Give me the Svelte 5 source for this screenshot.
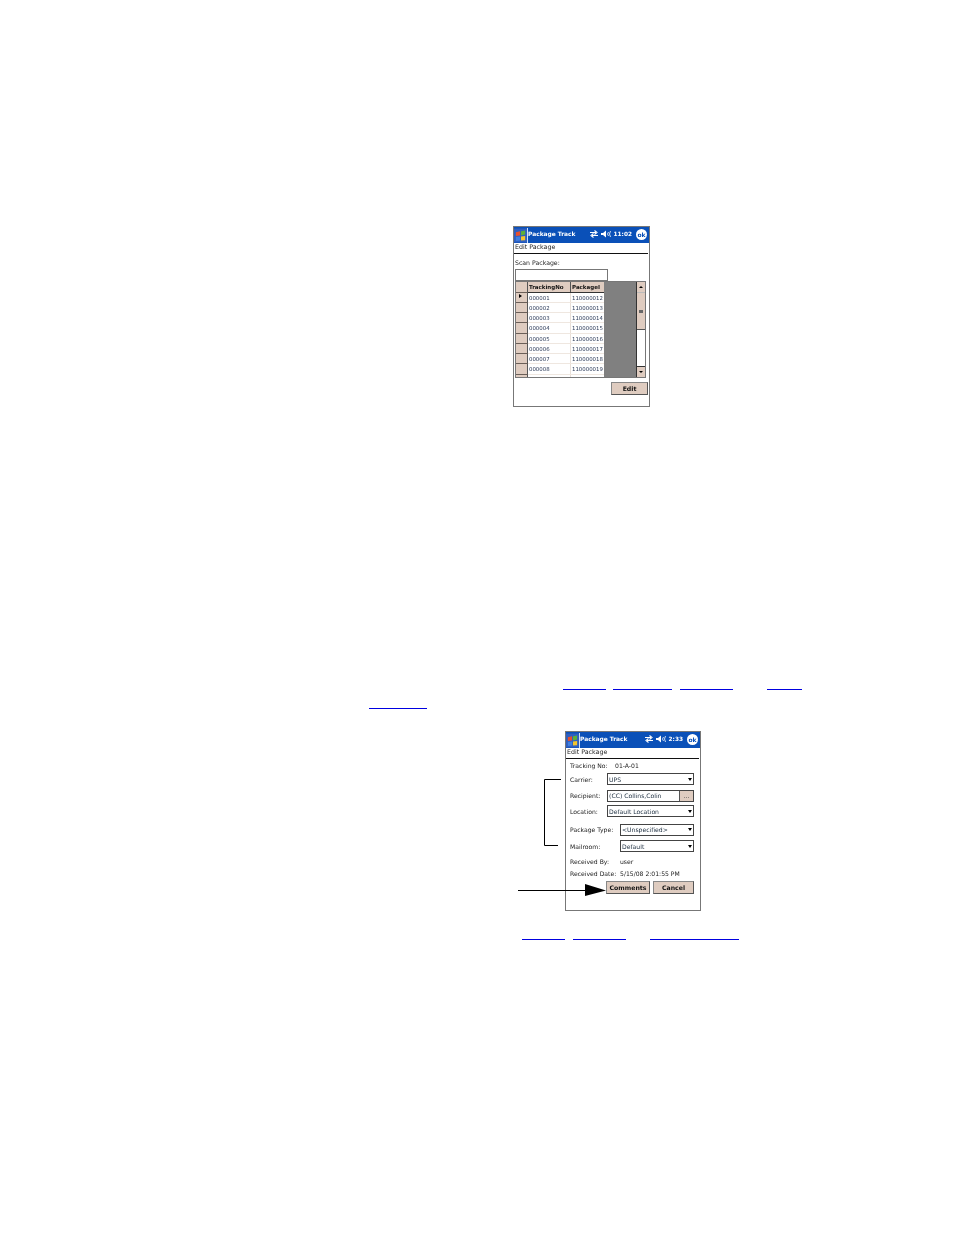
<script lang="ts">
  const rows = [
    ["000001", "110000012"],
    ["000002", "110000013"],
    ["000003", "110000014"],
    ["000004", "110000015"],
    ["000005", "110000016"],
    ["000006", "110000017"],
    ["000007", "110000018"],
    ["000008", "110000019"],
  ];

  // blue underlines left over from the cross references on the page
  const links = [
    { x: 563, y: 689, w: 43 },
    { x: 613, y: 689, w: 59 },
    { x: 680, y: 689, w: 53 },
    { x: 767, y: 689, w: 35 },
    { x: 369, y: 708, w: 58 },
    { x: 522, y: 939, w: 43 },
    { x: 573, y: 939, w: 53 },
    { x: 650, y: 939, w: 89 },
  ];
</script>

{#snippet titlebar(time)}
  <div class="titlebar">
    <svg class="flag" viewBox="0 0 14 15" width="13" height="15">
      <rect width="14" height="15" fill="#2f5fc0" />
      <path d="M2 4 L6.5 3 L6.5 7.5 L2 8Z" fill="#e8502c" />
      <path d="M7.5 3 L12 2 L12 6.5 L7.5 7.5Z" fill="#5cb03a" />
      <path d="M2 9 L6.5 8.5 L6.5 13 L2 13.5Z" fill="#3f7fe0" />
      <path d="M7.5 8.5 L12 8 L12 12.5 L7.5 13Z" fill="#f5c52a" />
    </svg>
    <span class="app-name">Package Track</span>
    <svg class="status" viewBox="0 0 10 8" width="10" height="8">
      <path d="M1 2.5H7M5.5 0.5L8 2.5L5.5 4.5M9 5.5H3M4.5 3.5L2 5.5L4.5 7.5" stroke="#fff" stroke-width="1.1" fill="none" />
    </svg>
    <svg class="status" viewBox="0 0 10 8" width="10" height="8">
      <path d="M0 3H2L5 0.5V7.5L2 5H0Z" fill="#fff" />
      <path d="M7.5 2L6.5 4L7.5 6M9.5 1L8.5 4L9.5 7" stroke="#fff" stroke-width="0.8" fill="none" />
    </svg>
    <span class="clock">{time}</span>
    <span class="ok">ok</span>
  </div>
  <div class="menu">Edit Package</div>
{/snippet}

{#snippet combo(text, cls)}
  <div class="combo {cls}">
    <span class="combo-text">{text}</span>
    <i class="caret"></i>
  </div>
{/snippet}

<div class="page">
  <div class="device first">
    {@render titlebar("11:02")}
    <div class="scan">
      <div class="label">Scan Package:</div>
      <div class="scan-input"></div>
      <div class="grid">
        <div class="grid-table">
          <div class="grid-row head">
            <span class="cell stub"></span>
            <span class="cell c1">TrackingNo</span>
            <span class="cell c2">PackageI</span>
          </div>
          {#each rows as row, i}
            <div class="grid-row">
              <span class="cell stub" class:current={i === 0}></span>
              <span class="cell c1">{row[0]}</span>
              <span class="cell c2">{row[1]}</span>
            </div>
          {/each}
          <div class="grid-row stump"><span class="cell stub"></span><span class="cell c1"></span><span class="cell c2"></span></div>
        </div>
        <div class="grid-empty"></div>
        <div class="scrollbar">
          <span class="arrow up"></span>
          <span class="thumb"><i></i></span>
          <span class="track"></span>
          <span class="arrow down"></span>
        </div>
      </div>
      <div class="actions">
        <button class="btn edit">Edit</button>
      </div>
    </div>
  </div>

  <div class="device second">
    {@render titlebar("2:33")}
    <div class="form">
      <div class="line tracking"><span class="k">Tracking No:</span><span>01-A-01</span></div>
      <div class="field"><span class="k">Carrier:</span>{@render combo("UPS", "wide")}</div>
      <div class="field tight"><span class="k">Recipient:</span>
        <div class="picker"><span class="combo-text">(CC) Collins,Colin</span><button class="dots">...</button></div>
      </div>
      <div class="field roomy"><span class="k">Location:</span>{@render combo("Default Location", "wide")}</div>
      <div class="field"><span class="k">Package Type:</span>{@render combo("<Unspecified>", "narrow")}</div>
      <div class="field tight"><span class="k">Mailroom:</span>{@render combo("Default", "narrow")}</div>
      <div class="line received"><span class="k2">Received By:</span><span>user</span></div>
      <div class="line received"><span class="k2">Received Date:</span><span>5/15/08 2:01:55 PM</span></div>
      <div class="form-actions">
        <button class="btn comments">Comments</button>
        <button class="btn cancel">Cancel</button>
      </div>
    </div>
  </div>

  <!-- callouts drawn over the page -->
  <svg class="callouts" viewBox="0 0 954 1235" width="954" height="1235">
    <path d="M561 779.5H544.5V845.5H558" stroke="#000" fill="none" />
    <path d="M518 890.5H590" stroke="#000" fill="none" />
    <path d="M585 884L606 890.5L585 896Z" fill="#000" />
  </svg>

  {#each links as l}
    <span class="link" style="left:{l.x}px;top:{l.y}px;width:{l.w}px"></span>
  {/each}
</div>

<style>
  :global(body) {
    margin: 0;
    background: #fff;
  }

  .page {
    position: relative;
    width: 954px;
    height: 1235px;
    overflow: hidden;
    font-family: "DejaVu Sans", sans-serif;
    font-size: 6.1px;
    color: #222;
  }

  .device {
    position: absolute;
    box-sizing: border-box;
    border: 1px solid #777;
    background: #fff;
    width: 137px;
    display: flex;
    flex-direction: column;
    filter: blur(0.25px);
  }

  .first {
    left: 513px;
    top: 226px;
    height: 181px;
  }

  .second {
    left: 565px;
    top: 731px;
    width: 136px;
    height: 180px;
  }

  .titlebar {
    height: 14px;
    padding-bottom: 2px;
    box-sizing: content-box;
    background: #0a50b8;
    display: flex;
    align-items: center;
    color: #fff;
    flex: none;
  }

  .flag {
    flex: none;
    margin-bottom: -2px;
    border-right: 1px solid #cfe0f7;
  }

  .app-name {
    font-weight: 700;
    flex: 1;
    white-space: nowrap;
    font-size: 5.9px;
  }

  .status {
    margin-right: 2px;
  }

  .clock {
    font-weight: 700;
    font-size: 5.8px;
    margin: 0 4px 0 1px;
  }

  .ok {
    width: 11px;
    height: 11px;
    border-radius: 50%;
    background: #fff;
    color: #0a50b8;
    font-weight: 700;
    font-size: 6px;
    line-height: 11px;
    text-align: center;
    margin-right: 2px;
  }

  .menu {
    height: 10px;
    line-height: 7px;
    padding-left: 1px;
    border-bottom: 1.5px solid #111;
    margin-right: 1px;
    flex: none;
    font-size: 6.3px;
  }

  .scan {
    padding: 0 1px;
    flex: 1;
    display: flex;
    flex-direction: column;
  }

  .label {
    height: 13px;
    line-height: 13px;
    padding-top: 2px;
    font-size: 6.2px;
  }

  .scan-input {
    width: 93px;
    height: 12px;
    box-sizing: border-box;
    border: 1px solid #777;
    flex: none;
  }

  .grid {
    display: flex;
    width: 131px;
    height: 97px;
    background: #808080;
    border: 1px solid #777;
    box-sizing: border-box;
    overflow: hidden;
  }

  .grid-table {
    width: 88px;
    flex: none;
    background: #fff;
    overflow: hidden;
  }

  .grid-row {
    display: flex;
    height: 10.25px;
    line-height: 10px;
    box-sizing: border-box;
    border-bottom: 1px solid #efe7e0;
    color: #2c3a58;
    font-size: 5.4px;
  }

  .head {
    color: #111;
    font-weight: 700;
    height: 10.5px;
    border-bottom: 1px solid #333;
    font-size: 5.5px;
  }

  .head .cell {
    background: #dfccc0;
    border-right-color: #555;
  }

  .cell {
    display: block;
    white-space: nowrap;
    overflow: hidden;
    box-sizing: border-box;
    padding-left: 1px;
    border-right: 1px solid #e8dfd8;
  }

  .stub {
    width: 12px;
    background: #dfccc0;
    border-bottom: 1px solid #6b5f58;
    border-right-color: #555;
    margin-bottom: -1px;
    position: relative;
  }

  .current::after {
    content: "";
    position: absolute;
    left: 3px;
    top: 1px;
    border-left: 3px solid #000;
    border-top: 2.5px solid transparent;
    border-bottom: 2.5px solid transparent;
  }

  .c1 {
    width: 43px;
  }

  .c2 {
    width: 33px;
    border-right: 0;
  }

  .stump {
    border: 0;
  }

  .grid-empty {
    flex: 1;
  }

  .scrollbar {
    width: 8px;
    flex: none;
    background: #fff;
    border-left: 1px solid #333;
    display: flex;
    flex-direction: column;
  }

  .arrow {
    height: 10px;
    background: #dfccc0;
    flex: none;
    position: relative;
  }

  .arrow::after {
    content: "";
    position: absolute;
    left: 1.5px;
    top: 4px;
    border-left: 2.5px solid transparent;
    border-right: 2.5px solid transparent;
  }

  .up::after {
    border-bottom: 2.5px solid #000;
  }

  .down {
    border-top: 1px solid #333;
  }

  .down::after {
    border-top: 2.5px solid #000;
  }

  .thumb {
    height: 38px;
    background: #dfccc0;
    border-top: 1px solid #bbb;
    border-bottom: 1px solid #555;
    display: flex;
    align-items: center;
    justify-content: center;
    box-sizing: border-box;
    flex: none;
  }

  .thumb i {
    width: 4px;
    height: 3px;
    background: #666;
  }

  .track {
    flex: 1;
  }

  .actions {
    display: flex;
    justify-content: flex-end;
    padding-top: 4px;
  }

  .btn {
    font: 700 6.2px "DejaVu Sans", sans-serif;
    background: #dfccc0;
    border: 1px solid #555;
    border-top-color: #888;
    border-left-color: #888;
    color: #111;
    height: 13px;
    padding: 0;
    box-sizing: border-box;
  }

  .edit {
    width: 37px;
  }

  .form {
    padding: 0 6px 0 4px;
    display: flex;
    flex-direction: column;
  }

  .line {
    display: flex;
    align-items: center;
    white-space: nowrap;
  }

  .tracking {
    height: 12px;
    margin-bottom: 2px;
  }

  .tracking .k {
    width: 45px;
  }

  .field {
    display: flex;
    align-items: center;
    justify-content: space-between;
    height: 12px;
    margin-bottom: 4.5px;
    white-space: nowrap;
  }

  .tight {
    margin-bottom: 3.5px;
  }

  .roomy {
    margin-bottom: 6.5px;
  }

  .combo,
  .picker {
    height: 12px;
    box-sizing: border-box;
    border: 1px solid #444;
    background: #fff;
    display: flex;
    align-items: center;
    flex: none;
    color: #234;
  }

  .wide {
    width: 87px;
  }

  .narrow {
    width: 74px;
  }

  .picker {
    width: 87px;
    overflow: hidden;
  }

  .combo-text {
    flex: 1;
    padding-left: 1px;
    font-size: 6.1px;
  }

  .caret {
    border-left: 2.5px solid transparent;
    border-right: 2.5px solid transparent;
    border-top: 3px solid #000;
    margin-right: 1.5px;
  }

  .dots {
    width: 14px;
    height: 12px;
    border: 0;
    border-left: 1px solid #555;
    background: #dfccc0;
    padding: 0;
    font: 6px "DejaVu Sans", sans-serif;
    color: #333;
  }

  .received {
    height: 12px;
  }

  .k2 {
    width: 50px;
  }

  .form-actions {
    display: flex;
    justify-content: flex-end;
    gap: 3px;
    margin-top: 1px;
  }

  .comments {
    width: 44px;
  }

  .cancel {
    width: 41px;
  }

  .callouts {
    position: absolute;
    left: 0;
    top: 0;
    pointer-events: none;
  }

  .link {
    position: absolute;
    height: 1px;
    background: #0000e0;
  }
</style>
